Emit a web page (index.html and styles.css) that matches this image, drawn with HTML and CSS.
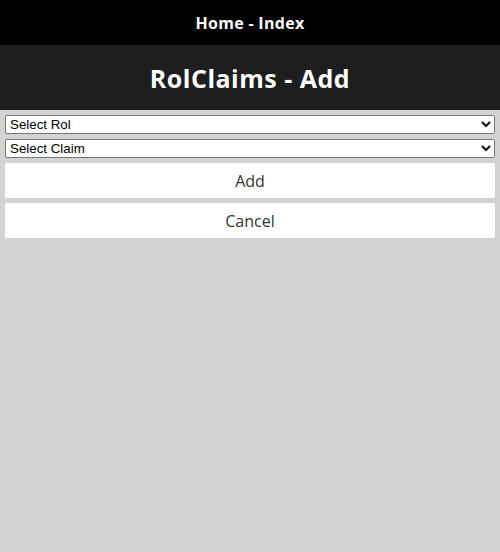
FILE: index.html
```html
<!DOCTYPE html>
<html>
<head>
<meta charset="utf-8">
<link rel="stylesheet" href="styles.css">
</head>
<body>
<header class="topbar"><a class="home" href="#">Home - Index</a></header>
<div class="titlebar"><h1>RolClaims - Add</h1></div>
<form class="form">
  <select class="sel"><option>Select Rol</option></select>
  <select class="sel"><option>Select Claim</option></select>
  <button type="button" class="btn">Add</button>
  <button type="button" class="btn">Cancel</button>
</form>
</body>
</html>
```
FILE: styles.css
```css
html, body { margin: 0; padding: 0; }
body {
  background: #d3d3d3;
  font-family: "Open Sans", sans-serif;
  width: 500px;
  height: 552px;
}
.topbar {
  background: #000;
  height: 45px;
  display: flex;
  align-items: center;
  justify-content: center;
}
.home {
  color: #fff;
  text-decoration: none;
  font-weight: 700;
  font-size: 16px;
  letter-spacing: 0.3px;
}
.titlebar {
  background: #1e1e1e;
  height: 65px;
  display: flex;
  align-items: center;
  justify-content: center;
}
.titlebar h1 {
  margin: 0;
  color: #fff;
  font-size: 25px;
  font-weight: 700;
  letter-spacing: 0.5px;
}
.form {
  display: flex;
  flex-direction: column;
  padding: 5px;
  gap: 5px;
}
.sel {
  font-family: "Liberation Sans", Arial, sans-serif;
  font-size: 13.33px;
  height: 19px;
  margin: 0;
  width: 490px;
}
.btn {
  background: #fff;
  border: none;
  border-radius: 2px;
  height: 35px;
  font-family: "Open Sans", sans-serif;
  font-size: 16px;
  color: #333;
  padding: 0;
}
```
